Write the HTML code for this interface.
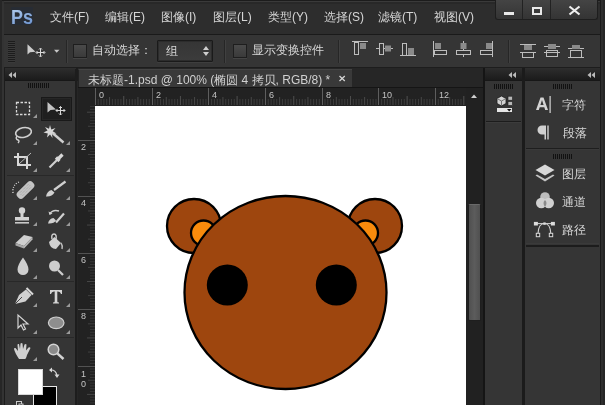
<!DOCTYPE html>
<html><head><meta charset="utf-8">
<style>
*{margin:0;padding:0;box-sizing:border-box}
html,body{width:605px;height:405px;overflow:hidden;background:#2a2a2a;font-family:"Liberation Sans",sans-serif;}
.a{position:absolute}
.t{position:absolute;color:#d6d6d6;font-size:12px;line-height:14px;white-space:nowrap;will-change:transform}
</style></head><body>
<!-- window frame -->
<div class="a" style="left:0;top:0;width:605px;height:405px;background:#2d2d2d"></div>
<div class="a" style="left:0;top:0;width:605px;height:1px;background:#1c1c1c"></div>
<div class="a" style="left:4px;top:1px;width:597px;height:1px;background:#3a3a3a"></div>
<div class="a" style="left:4px;top:2px;width:597px;height:2px;background:#282828"></div>
<div class="a" style="left:0;top:0;width:2px;height:2px;background:#cfcfcf;border-radius:0 0 2px 0"></div>
<div class="a" style="left:0;top:0;width:2px;height:405px;background:#262626"></div>
<div class="a" style="left:2px;top:1px;width:2px;height:404px;background:#333"></div>

<!-- menu bar -->
<svg class="a" style="left:10px;top:6px;will-change:transform" width="24" height="20"><defs><linearGradient id="pg" x1="0" y1="0" x2="0.4" y2="1"><stop offset="0" stop-color="#b8d2f0"/><stop offset="1" stop-color="#7096d0"/></linearGradient></defs>
<rect x="1" y="1" width="22" height="18" fill="#1c2a44" opacity="0.3"/>
<text x="1" y="18" font-family="Liberation Sans" font-weight="bold" font-size="20" fill="url(#pg)" textLength="22" lengthAdjust="spacingAndGlyphs">Ps</text></svg>
<div class="t" style="left:50px;top:10px">文件(F)</div>
<div class="t" style="left:105px;top:10px">编辑(E)</div>
<div class="t" style="left:161px;top:10px">图像(I)</div>
<div class="t" style="left:213px;top:10px">图层(L)</div>
<div class="t" style="left:268px;top:10px">类型(Y)</div>
<div class="t" style="left:324px;top:10px">选择(S)</div>
<div class="t" style="left:378px;top:10px">滤镜(T)</div>
<div class="t" style="left:434px;top:10px">视图(V)</div>

<!-- window buttons -->
<div class="a" style="left:495px;top:0;width:103px;height:20px;background:linear-gradient(#444,#343434);border:1px solid #1e1e1e;border-top:none;border-radius:0 0 3px 3px"></div>
<div class="a" style="left:522px;top:0;width:1px;height:19px;background:#222"></div>
<div class="a" style="left:550px;top:0;width:1px;height:19px;background:#222"></div>
<div class="a" style="left:504px;top:12px;width:10px;height:3px;background:#e8e8e8"></div>
<div class="a" style="left:532px;top:7px;width:10px;height:8px;border:2px solid #e8e8e8"></div>
<svg class="a" style="left:568px;top:5px" width="13" height="11"><path d="M1.5 1.5 L11.5 9.5 M11.5 1.5 L1.5 9.5" stroke="#eee" stroke-width="2.2"/></svg>

<!-- options bar -->
<div class="a" style="left:4px;top:34px;width:597px;height:1px;background:#1a1a1a"></div>
<div class="a" style="left:4px;top:35px;width:596px;height:33px;background:#353535"></div>
<div class="a" style="left:4px;top:67px;width:597px;height:1px;background:#1d1d1d"></div>

<!-- options bar content -->
<div class="a" style="left:8px;top:41px;width:7px;height:22px;background:repeating-linear-gradient(#1c1c1c 0 1px,#3a3a3a 1px 2px)"></div>
<svg class="a" style="left:25px;top:43px" width="36" height="16">
 <path d="M2.5 1.3 L2.5 11.5 L5 9.2 L10.5 8.8 Z" fill="#cdcdcd"/>
 <path d="M15.5 5.5 V13.5 M11.5 9.5 H19.5" stroke="#dadada" stroke-width="1"/>
 <path d="M14 6.5 L15.5 5 L17 6.5 M14 12.5 L15.5 14 L17 12.5 M12.5 8 L11 9.5 L12.5 11 M18.5 8 L20 9.5 L18.5 11" stroke="#dadada" stroke-width="1" fill="none"/>
 <path d="M29 6.8 L34.5 6.8 L31.7 9.8 Z" fill="#c8c8c8"/>
</svg>
<div class="a" style="left:66px;top:40px;width:1px;height:23px;background:#262626"></div>
<div class="a" style="left:67px;top:40px;width:1px;height:23px;background:#404040"></div>
<div class="a" style="left:73px;top:44px;width:14px;height:14px;background:linear-gradient(#4a4a4a,#3a3a3a);border:1px solid #1e1e1e;box-shadow:0 1px 0 #444"></div>
<div class="t" style="left:92px;top:43px">自动选择：</div>
<div class="a" style="left:157px;top:40px;width:56px;height:22px;background:linear-gradient(#353535,#3c3c3c);border:1px solid #1a1a1a;box-shadow:inset 0 0 0 1px #2c2c2c, 0 1px 0 #3e3e3e;border-radius:1px"></div>
<div class="t" style="left:166px;top:44px">组</div>
<svg class="a" style="left:202px;top:45px" width="8" height="12"><path d="M1 5 L4 1 L7 5 Z M1 7 L4 11 L7 7 Z" fill="#cfcfcf"/></svg>
<div class="a" style="left:224px;top:40px;width:1px;height:23px;background:#262626"></div>
<div class="a" style="left:225px;top:40px;width:1px;height:23px;background:#404040"></div>
<div class="a" style="left:233px;top:44px;width:14px;height:14px;background:linear-gradient(#4a4a4a,#3a3a3a);border:1px solid #1e1e1e;box-shadow:0 1px 0 #444"></div>
<div class="t" style="left:252px;top:43px">显示变换控件</div>
<div class="a" style="left:338px;top:40px;width:1px;height:23px;background:#262626"></div>
<div class="a" style="left:339px;top:40px;width:1px;height:23px;background:#404040"></div>
<div class="a" style="left:508px;top:40px;width:1px;height:23px;background:#262626"></div>
<div class="a" style="left:509px;top:40px;width:1px;height:23px;background:#404040"></div>
<svg class="a" style="left:350px;top:40px" width="240" height="20" fill="none" stroke="#bdbdbd" stroke-width="1">
 <!-- align top -->
 <path d="M2 1.5 H18"/><rect x="4.5" y="2.5" width="4" height="12"/><rect x="10" y="3" width="6" height="6" fill="#8a8a8a" stroke="none"/>
 <!-- align v center -->
 <path d="M26 8.5 H43"/><rect x="29.5" y="3.5" width="4" height="11" fill="#353535"/><rect x="35" y="5.5" width="6" height="6" fill="#8a8a8a" stroke="none"/>
 <!-- align bottom -->
 <path d="M50 15.5 H66"/><rect x="52.5" y="3.5" width="4" height="12"/><rect x="58" y="8" width="6" height="7" fill="#8a8a8a" stroke="none"/>
 <!-- align left -->
 <path d="M83.5 1 V17"/><rect x="84.5" y="10.5" width="12" height="4"/><rect x="85" y="3" width="6" height="6" fill="#8a8a8a" stroke="none"/>
 <!-- align h center -->
 <path d="M113.5 1 V17"/><rect x="106.5" y="10.5" width="14" height="4" fill="#353535"/><rect x="110.5" y="3" width="6" height="6" fill="#8a8a8a" stroke="none"/>
 <!-- align right -->
 <path d="M142.5 1 V17"/><rect x="130.5" y="10.5" width="12" height="4"/><rect x="136" y="3" width="6" height="6" fill="#8a8a8a" stroke="none"/>
 <!-- distribute -->
 <g transform="translate(0 2)">
 <path d="M170 2.5 H186 M170 10.5 H186"/><rect x="174" y="3" width="8" height="5" fill="#8a8a8a" stroke="none"/><rect x="172.5" y="10.5" width="11" height="5"/>
 <path d="M194 4.5 H210 M194 10.5 H210"/><rect x="198" y="2" width="8" height="5" fill="#8a8a8a" stroke="none"/><rect x="196.5" y="8.5" width="11" height="6"/>
 <path d="M218 6.5 H234 M218 15.5 H234"/><rect x="222" y="3" width="8" height="4" fill="#8a8a8a" stroke="none"/><rect x="220.5" y="8.5" width="11" height="7"/>
 </g>
</svg>

<!-- ===== left tools panel ===== -->
<div class="a" style="left:4px;top:68px;width:1px;height:337px;background:#1c1c1c"></div>
<div class="a" style="left:5px;top:69px;width:71px;height:12px;background:linear-gradient(#2c2c2c,#1b1b1b);border-bottom:1px solid #171717"></div>
<svg class="a" style="left:8px;top:71px" width="12" height="8"><path d="M4 1 L0.5 4 L4 7 Z M8 1 L4.5 4 L8 7 Z" fill="#bbb"/></svg>
<div class="a" style="left:5px;top:81px;width:71px;height:324px;background:#353535"></div>
<div class="a" style="left:76px;top:68px;width:2px;height:337px;background:#1d1d1d"></div>
<div class="a" style="left:77px;top:81px;width:1px;height:324px;background:#262626"></div>
<div class="a" style="left:75px;top:69px;width:1px;height:336px;background:#1d1d1d"></div>
<div class="a" style="left:28px;top:83px;width:21px;height:5px;background:repeating-linear-gradient(90deg,#111 0 1px,#353535 1px 2px)"></div>
<div class="a" style="left:41px;top:97px;width:31px;height:24px;background:#1f1f1f;border:1px solid #191919;box-shadow:inset 0 0 0 1px #262626"></div>

<!-- tool separators -->
<div class="a" style="left:7px;top:175px;width:67px;height:1px;background:#282828"></div>
<div class="a" style="left:7px;top:281px;width:67px;height:1px;background:#282828"></div>
<div class="a" style="left:7px;top:337px;width:67px;height:1px;background:#282828"></div>
<svg class="a" style="left:0;top:0" width="80" height="405">
 <g fill="#9a9a9a">
  <path d="M37 114 V118 H33Z"/>
  <path d="M37 141 V145 H33Z"/><path d="M70 141 V145 H66Z"/>
  <path d="M37 168 V172 H33Z"/><path d="M70 168 V172 H66Z"/>
  <path d="M37 196 V200 H33Z"/><path d="M70 196 V200 H66Z"/>
  <path d="M37 222 V226 H33Z"/><path d="M70 222 V226 H66Z"/>
  <path d="M37 248 V252 H33Z"/><path d="M70 248 V252 H66Z"/>
  <path d="M37 275 V279 H33Z"/><path d="M70 275 V279 H66Z"/>
  <path d="M37 303 V307 H33Z"/><path d="M70 303 V307 H66Z"/>
  <path d="M37 330 V334 H33Z"/><path d="M70 330 V334 H66Z"/>
  <path d="M37 357 V361 H33Z"/>
 </g>
 <!-- marquee -->
 <rect x="16.5" y="102.5" width="13" height="12" fill="none" stroke="#d8d8d8" stroke-width="1.3" stroke-dasharray="2.5 1.5"/>
 <!-- move -->
 <path d="M47.5 102 L47.5 112.5 L50.5 110 L56 109.5 Z" fill="#c4c4c4"/>
 <g stroke="#d8d8d8" stroke-width="1" fill="none"><path d="M60.5 106.5 V115 M56 110.5 H65"/><path d="M59 108 L60.5 106.5 L62 108 M59 113.5 L60.5 115 L62 113.5 M57.5 109 L56 110.5 L57.5 112 M63.5 109 L65 110.5 L63.5 112"/></g>
 <!-- lasso -->
 <ellipse cx="23.5" cy="132.5" rx="8" ry="4.8" transform="rotate(-12 23.5 132.5)" fill="none" stroke="#d0d0d0" stroke-width="1.6"/>
 <path d="M17 136 Q15 139 18 140 Q20 141 18 143" fill="none" stroke="#d0d0d0" stroke-width="1.4"/>
 <!-- magic wand -->
 <path d="M50 125 L51.3 129.5 L55.5 128 L52.7 131.3 L56.5 133.5 L52 133.8 L52.5 138 L50 134.5 L47 137.5 L47.8 133.5 L43.5 132.5 L47.5 130.5 L45 127 L49 128.8Z" fill="#d8d8d8"/>
 <path d="M52.5 133 L63.5 142.5" stroke="#cfcfcf" stroke-width="2.4"/>
 <!-- crop -->
 <g stroke="#d8d8d8" stroke-width="2" fill="none"><path d="M18 153 V165 H31"/><path d="M14 157 H27 V169"/></g>
 <path d="M19 164 L31 153" stroke="#bbb" stroke-width="1"/>
 <!-- eyedropper -->
 <path d="M49.5 167.5 L58 159" stroke="#d0d0d0" stroke-width="2.2"/>
 <path d="M56 157.5 L59.5 161 M58 159 L62.5 154.5" stroke="#d8d8d8" stroke-width="3.2"/>
 <!-- healing -->
 <g transform="rotate(-45 25.5 190)"><rect x="15" y="186" width="21" height="8" rx="3.5" fill="#c4c4c4"/><path d="M19 188 h13 M19 190 h13 M19 192 h13" stroke="#8a8a8a" stroke-width="0.6" stroke-dasharray="1 1"/></g>
 <path d="M13 193 Q12 185 19 182" fill="none" stroke="#ddd" stroke-width="1.3" stroke-dasharray="1 1.5"/>
 <!-- brush -->
 <path d="M54 190 L65.5 181.5" stroke="#d0d0d0" stroke-width="2.2"/>
 <path d="M46 196.5 Q47 191 51.5 190 L54.5 192.5 Q52 197 46 196.5Z" fill="#d0d0d0"/>
 <!-- stamp -->
 <circle cx="22" cy="210.5" r="3.2" fill="#d4d4d4"/>
 <rect x="20.5" y="212" width="3" height="5" fill="#d4d4d4"/>
 <path d="M15 217 H29 V220.5 H15Z" fill="#d4d4d4"/>
 <rect x="15" y="222" width="14" height="1.6" fill="#c8c8c8"/>
 <!-- history brush -->
 <path d="M56 222.5 L64 213.5" stroke="#d0d0d0" stroke-width="2.2"/>
 <path d="M48 223.5 Q49 218.5 53.5 218 L56 220.5 Q54 224 48 223.5Z" fill="#d0d0d0"/>
 <path d="M49.5 214 Q53 209 59 211" fill="none" stroke="#cfcfcf" stroke-width="1.4"/>
 <path d="M48.5 211.5 L49.5 215 L52.5 213.5Z" fill="#cfcfcf"/>
 <!-- eraser -->
 <path d="M15.5 243 L24 235 L32.5 237 L24 246 Z" fill="#d0d0d0"/>
 <path d="M15.5 243 L24 246 L24 248.5 L15.5 245.5Z" fill="#a8a8a8"/>
 <path d="M24 246 L32.5 237 L32.5 239.5 L24 248.5Z" fill="#b8b8b8"/>
 <!-- bucket -->
 <path d="M49 242 L54.5 237 L61 243 L56 249 Q50 249 49 242Z" fill="#d0d0d0"/>
 <path d="M52 239 Q51 234 54 234 Q57 234 56 240" fill="none" stroke="#d0d0d0" stroke-width="1.4"/>
 <path d="M61 243 Q63 246 62 249" stroke="#bbb" stroke-width="1.5" fill="none"/>
 <!-- blur drop -->
 <path d="M23 257.5 Q28.5 265 28.5 269.5 A5.5 5.5 0 0 1 17.5 269.5 Q17.5 265 23 257.5Z" fill="#cfcfcf"/>
 <!-- dodge -->
 <circle cx="54.5" cy="266" r="5.5" fill="#cdcdcd"/>
 <path d="M58 270 L63 275" stroke="#cdcdcd" stroke-width="2.3"/>
 <!-- pen -->
 <path d="M15 304 L19 295 L26 289.5 L31.5 295 L25.5 301.5 Z" fill="#d0d0d0"/>
 <path d="M15 304 L22 297" stroke="#444" stroke-width="1"/>
 <path d="M26.5 288 L33 294.5" stroke="#d8d8d8" stroke-width="2"/>
 <!-- T -->
 <path d="M50 290 H62 V294 H61 Q60.5 291.5 58 291.5 H57.3 V301.5 Q57.3 302.6 59 302.6 V303.5 H53 V302.6 Q54.7 302.6 54.7 301.5 V291.5 H54 Q51.5 291.5 51 294 H50Z" fill="#d4d4d4"/>
 <!-- path select -->
 <path d="M18 315 L18 328 L21 325 L23.5 330 L25.5 329 L23 324 L28 324 Z" fill="#303030" stroke="#d4d4d4" stroke-width="1.2"/>
 <!-- ellipse -->
 <ellipse cx="56.2" cy="322.8" rx="7.8" ry="5.8" fill="#8e8e8e" stroke="#d0d0d0" stroke-width="1.2"/>
 <!-- hand -->
 <path d="M19 359 Q15 353 14 349 Q14 347.5 15.5 348 L18 351 L17.5 345 Q17.5 343.5 19 344 L20 349 L20.5 343.5 Q21.5 342.5 22.5 343.5 L23 349 L24.5 344.5 Q25.5 343.5 26.5 344.5 L26 350.5 L28.5 347.5 Q30 347 30.5 348 L27 355 Q26 359 25 359Z" fill="#d0d0d0"/>
 <!-- zoom -->
 <circle cx="53.5" cy="349.5" r="5.3" fill="#8a8a8a" stroke="#d4d4d4" stroke-width="1.5"/>
 <path d="M57.3 353.3 L63.5 359" stroke="#d4d4d4" stroke-width="2.5"/>
 <!-- swap / default -->
 <path d="M50 370 Q56 369.5 57 376" fill="none" stroke="#cfcfcf" stroke-width="1.3"/><path d="M52 367.5 L49 370 L52 372.5Z M54.5 374.5 L57 378 L59.5 374.5Z" fill="#d8d8d8"/>
 <rect x="16.5" y="401.5" width="5" height="5" fill="none" stroke="#ccc" stroke-width="1"/><rect x="19" y="404" width="4" height="4" fill="#222" stroke="#ccc" stroke-width="1"/>
</svg>
<div class="a" style="left:33px;top:386px;width:24px;height:24px;background:#000;border:1px solid #e6e6e6"></div>
<div class="a" style="left:18px;top:369px;width:25px;height:26px;background:#fff;border:1px solid #d8d8d8"></div>

<!-- ===== document area ===== -->
<div class="a" style="left:78px;top:68px;width:405px;height:20px;background:#262626"></div>
<div class="a" style="left:78px;top:69px;width:274px;height:19px;background:#393939;border-left:1px solid #222;border-top:1px solid #444"></div>
<div class="t" style="left:88px;top:73px;color:#d0d0d0">未标题-1.psd @ 100% (椭圆 4 拷贝, RGB/8) *</div>
<svg class="a" style="left:338px;top:74px" width="9" height="9"><path d="M1.5 2 L6.8 7 M6.8 2 L1.5 7" stroke="#d4d4d4" stroke-width="1.3"/></svg>
<div class="a" style="left:78px;top:88px;width:388px;height:18px;background:#222"></div>
<div class="a" style="left:78px;top:87px;width:405px;height:1px;background:#151515"></div>
<div class="a" style="left:78px;top:88px;width:17px;height:317px;background:#222"></div>
<div class="a" style="left:95px;top:106px;width:371px;height:299px;background:#fff"></div>
<div class="a" style="left:466px;top:88px;width:17px;height:317px;background:#212121"></div>
<div class="a" style="left:483px;top:68px;width:2px;height:337px;background:#151515"></div>

<!-- ===== right panels ===== -->
<div class="a" style="left:485px;top:69px;width:37px;height:12px;background:linear-gradient(#2c2c2c,#1b1b1b);border-bottom:1px solid #171717"></div>
<div class="a" style="left:485px;top:81px;width:37px;height:324px;background:#353535"></div>
<div class="a" style="left:522px;top:68px;width:3px;height:337px;background:#1b1b1b"></div>
<div class="a" style="left:525px;top:69px;width:75px;height:12px;background:linear-gradient(#2c2c2c,#1b1b1b);border-bottom:1px solid #171717"></div>
<div class="a" style="left:525px;top:81px;width:75px;height:324px;background:#353535"></div>
<div class="a" style="left:600px;top:0;width:1px;height:405px;background:#1a1a1a"></div>
<div class="a" style="left:601px;top:0;width:4px;height:405px;background:#2e2e2e"></div>
<div class="a" style="left:603px;top:0;width:2px;height:405px;background:#262626"></div>

<svg class="a" style="left:0;top:0" width="605" height="405"><g stroke-width="1"><path d="M95.5 88 V105" stroke="#5e5e5e"/><path d="M98.23 99 V105" stroke="#3e3e3e"/><path d="M101.07 99 V105" stroke="#3e3e3e"/><path d="M103.90 99 V105" stroke="#3e3e3e"/><path d="M106.74 99 V105" stroke="#3e3e3e"/><path d="M109.57 97 V105" stroke="#484848"/><path d="M112.40 99 V105" stroke="#3e3e3e"/><path d="M115.24 99 V105" stroke="#3e3e3e"/><path d="M118.07 99 V105" stroke="#3e3e3e"/><path d="M120.91 99 V105" stroke="#3e3e3e"/><path d="M123.74 96 V105" stroke="#505050"/><path d="M126.57 99 V105" stroke="#3e3e3e"/><path d="M129.41 99 V105" stroke="#3e3e3e"/><path d="M132.24 99 V105" stroke="#3e3e3e"/><path d="M135.08 99 V105" stroke="#3e3e3e"/><path d="M137.91 97 V105" stroke="#484848"/><path d="M140.74 99 V105" stroke="#3e3e3e"/><path d="M143.58 99 V105" stroke="#3e3e3e"/><path d="M146.41 99 V105" stroke="#3e3e3e"/><path d="M149.25 99 V105" stroke="#3e3e3e"/><path d="M152.5 88 V105" stroke="#5e5e5e"/><path d="M154.91 99 V105" stroke="#3e3e3e"/><path d="M157.75 99 V105" stroke="#3e3e3e"/><path d="M160.58 99 V105" stroke="#3e3e3e"/><path d="M163.42 99 V105" stroke="#3e3e3e"/><path d="M166.25 97 V105" stroke="#484848"/><path d="M169.08 99 V105" stroke="#3e3e3e"/><path d="M171.92 99 V105" stroke="#3e3e3e"/><path d="M174.75 99 V105" stroke="#3e3e3e"/><path d="M177.59 99 V105" stroke="#3e3e3e"/><path d="M180.42 96 V105" stroke="#505050"/><path d="M183.25 99 V105" stroke="#3e3e3e"/><path d="M186.09 99 V105" stroke="#3e3e3e"/><path d="M188.92 99 V105" stroke="#3e3e3e"/><path d="M191.76 99 V105" stroke="#3e3e3e"/><path d="M194.59 97 V105" stroke="#484848"/><path d="M197.42 99 V105" stroke="#3e3e3e"/><path d="M200.26 99 V105" stroke="#3e3e3e"/><path d="M203.09 99 V105" stroke="#3e3e3e"/><path d="M205.93 99 V105" stroke="#3e3e3e"/><path d="M208.5 88 V105" stroke="#5e5e5e"/><path d="M211.59 99 V105" stroke="#3e3e3e"/><path d="M214.43 99 V105" stroke="#3e3e3e"/><path d="M217.26 99 V105" stroke="#3e3e3e"/><path d="M220.10 99 V105" stroke="#3e3e3e"/><path d="M222.93 97 V105" stroke="#484848"/><path d="M225.76 99 V105" stroke="#3e3e3e"/><path d="M228.60 99 V105" stroke="#3e3e3e"/><path d="M231.43 99 V105" stroke="#3e3e3e"/><path d="M234.27 99 V105" stroke="#3e3e3e"/><path d="M237.10 96 V105" stroke="#505050"/><path d="M239.93 99 V105" stroke="#3e3e3e"/><path d="M242.77 99 V105" stroke="#3e3e3e"/><path d="M245.60 99 V105" stroke="#3e3e3e"/><path d="M248.44 99 V105" stroke="#3e3e3e"/><path d="M251.27 97 V105" stroke="#484848"/><path d="M254.10 99 V105" stroke="#3e3e3e"/><path d="M256.94 99 V105" stroke="#3e3e3e"/><path d="M259.77 99 V105" stroke="#3e3e3e"/><path d="M262.61 99 V105" stroke="#3e3e3e"/><path d="M265.5 88 V105" stroke="#5e5e5e"/><path d="M268.27 99 V105" stroke="#3e3e3e"/><path d="M271.11 99 V105" stroke="#3e3e3e"/><path d="M273.94 99 V105" stroke="#3e3e3e"/><path d="M276.78 99 V105" stroke="#3e3e3e"/><path d="M279.61 97 V105" stroke="#484848"/><path d="M282.44 99 V105" stroke="#3e3e3e"/><path d="M285.28 99 V105" stroke="#3e3e3e"/><path d="M288.11 99 V105" stroke="#3e3e3e"/><path d="M290.95 99 V105" stroke="#3e3e3e"/><path d="M293.78 96 V105" stroke="#505050"/><path d="M296.61 99 V105" stroke="#3e3e3e"/><path d="M299.45 99 V105" stroke="#3e3e3e"/><path d="M302.28 99 V105" stroke="#3e3e3e"/><path d="M305.12 99 V105" stroke="#3e3e3e"/><path d="M307.95 97 V105" stroke="#484848"/><path d="M310.78 99 V105" stroke="#3e3e3e"/><path d="M313.62 99 V105" stroke="#3e3e3e"/><path d="M316.45 99 V105" stroke="#3e3e3e"/><path d="M319.29 99 V105" stroke="#3e3e3e"/><path d="M322.5 88 V105" stroke="#5e5e5e"/><path d="M324.95 99 V105" stroke="#3e3e3e"/><path d="M327.79 99 V105" stroke="#3e3e3e"/><path d="M330.62 99 V105" stroke="#3e3e3e"/><path d="M333.46 99 V105" stroke="#3e3e3e"/><path d="M336.29 97 V105" stroke="#484848"/><path d="M339.12 99 V105" stroke="#3e3e3e"/><path d="M341.96 99 V105" stroke="#3e3e3e"/><path d="M344.79 99 V105" stroke="#3e3e3e"/><path d="M347.63 99 V105" stroke="#3e3e3e"/><path d="M350.46 96 V105" stroke="#505050"/><path d="M353.29 99 V105" stroke="#3e3e3e"/><path d="M356.13 99 V105" stroke="#3e3e3e"/><path d="M358.96 99 V105" stroke="#3e3e3e"/><path d="M361.80 99 V105" stroke="#3e3e3e"/><path d="M364.63 97 V105" stroke="#484848"/><path d="M367.46 99 V105" stroke="#3e3e3e"/><path d="M370.30 99 V105" stroke="#3e3e3e"/><path d="M373.13 99 V105" stroke="#3e3e3e"/><path d="M375.97 99 V105" stroke="#3e3e3e"/><path d="M378.5 88 V105" stroke="#5e5e5e"/><path d="M381.63 99 V105" stroke="#3e3e3e"/><path d="M384.47 99 V105" stroke="#3e3e3e"/><path d="M387.30 99 V105" stroke="#3e3e3e"/><path d="M390.14 99 V105" stroke="#3e3e3e"/><path d="M392.97 97 V105" stroke="#484848"/><path d="M395.80 99 V105" stroke="#3e3e3e"/><path d="M398.64 99 V105" stroke="#3e3e3e"/><path d="M401.47 99 V105" stroke="#3e3e3e"/><path d="M404.31 99 V105" stroke="#3e3e3e"/><path d="M407.14 96 V105" stroke="#505050"/><path d="M409.97 99 V105" stroke="#3e3e3e"/><path d="M412.81 99 V105" stroke="#3e3e3e"/><path d="M415.64 99 V105" stroke="#3e3e3e"/><path d="M418.48 99 V105" stroke="#3e3e3e"/><path d="M421.31 97 V105" stroke="#484848"/><path d="M424.14 99 V105" stroke="#3e3e3e"/><path d="M426.98 99 V105" stroke="#3e3e3e"/><path d="M429.81 99 V105" stroke="#3e3e3e"/><path d="M432.65 99 V105" stroke="#3e3e3e"/><path d="M435.5 88 V105" stroke="#5e5e5e"/><path d="M438.31 99 V105" stroke="#3e3e3e"/><path d="M441.15 99 V105" stroke="#3e3e3e"/><path d="M443.98 99 V105" stroke="#3e3e3e"/><path d="M446.82 99 V105" stroke="#3e3e3e"/><path d="M449.65 97 V105" stroke="#484848"/><path d="M452.48 99 V105" stroke="#3e3e3e"/><path d="M455.32 99 V105" stroke="#3e3e3e"/><path d="M458.15 99 V105" stroke="#3e3e3e"/><path d="M460.99 99 V105" stroke="#3e3e3e"/><path d="M463.82 96 V105" stroke="#505050"/><path d="M90 106.54 H95" stroke="#383838"/><path d="M90 109.36 H95" stroke="#383838"/><path d="M87 112.18 H95" stroke="#464646"/><path d="M90 115.00 H95" stroke="#383838"/><path d="M90 117.82 H95" stroke="#383838"/><path d="M90 120.65 H95" stroke="#383838"/><path d="M90 123.47 H95" stroke="#383838"/><path d="M88 126.29 H95" stroke="#404040"/><path d="M90 129.11 H95" stroke="#383838"/><path d="M90 131.93 H95" stroke="#383838"/><path d="M90 134.76 H95" stroke="#383838"/><path d="M90 137.58 H95" stroke="#383838"/><path d="M78 140.5 H95" stroke="#525252"/><path d="M90 143.22 H95" stroke="#383838"/><path d="M90 146.04 H95" stroke="#383838"/><path d="M90 148.87 H95" stroke="#383838"/><path d="M90 151.69 H95" stroke="#383838"/><path d="M88 154.51 H95" stroke="#404040"/><path d="M90 157.33 H95" stroke="#383838"/><path d="M90 160.15 H95" stroke="#383838"/><path d="M90 162.98 H95" stroke="#383838"/><path d="M90 165.80 H95" stroke="#383838"/><path d="M87 168.62 H95" stroke="#464646"/><path d="M90 171.44 H95" stroke="#383838"/><path d="M90 174.26 H95" stroke="#383838"/><path d="M90 177.09 H95" stroke="#383838"/><path d="M90 179.91 H95" stroke="#383838"/><path d="M88 182.73 H95" stroke="#404040"/><path d="M90 185.55 H95" stroke="#383838"/><path d="M90 188.37 H95" stroke="#383838"/><path d="M90 191.20 H95" stroke="#383838"/><path d="M90 194.02 H95" stroke="#383838"/><path d="M78 196.5 H95" stroke="#525252"/><path d="M90 199.66 H95" stroke="#383838"/><path d="M90 202.48 H95" stroke="#383838"/><path d="M90 205.31 H95" stroke="#383838"/><path d="M90 208.13 H95" stroke="#383838"/><path d="M88 210.95 H95" stroke="#404040"/><path d="M90 213.77 H95" stroke="#383838"/><path d="M90 216.59 H95" stroke="#383838"/><path d="M90 219.42 H95" stroke="#383838"/><path d="M90 222.24 H95" stroke="#383838"/><path d="M87 225.06 H95" stroke="#464646"/><path d="M90 227.88 H95" stroke="#383838"/><path d="M90 230.70 H95" stroke="#383838"/><path d="M90 233.53 H95" stroke="#383838"/><path d="M90 236.35 H95" stroke="#383838"/><path d="M88 239.17 H95" stroke="#404040"/><path d="M90 241.99 H95" stroke="#383838"/><path d="M90 244.81 H95" stroke="#383838"/><path d="M90 247.64 H95" stroke="#383838"/><path d="M90 250.46 H95" stroke="#383838"/><path d="M78 253.5 H95" stroke="#525252"/><path d="M90 256.10 H95" stroke="#383838"/><path d="M90 258.92 H95" stroke="#383838"/><path d="M90 261.75 H95" stroke="#383838"/><path d="M90 264.57 H95" stroke="#383838"/><path d="M88 267.39 H95" stroke="#404040"/><path d="M90 270.21 H95" stroke="#383838"/><path d="M90 273.03 H95" stroke="#383838"/><path d="M90 275.86 H95" stroke="#383838"/><path d="M90 278.68 H95" stroke="#383838"/><path d="M87 281.50 H95" stroke="#464646"/><path d="M90 284.32 H95" stroke="#383838"/><path d="M90 287.14 H95" stroke="#383838"/><path d="M90 289.97 H95" stroke="#383838"/><path d="M90 292.79 H95" stroke="#383838"/><path d="M88 295.61 H95" stroke="#404040"/><path d="M90 298.43 H95" stroke="#383838"/><path d="M90 301.25 H95" stroke="#383838"/><path d="M90 304.08 H95" stroke="#383838"/><path d="M90 306.90 H95" stroke="#383838"/><path d="M78 309.5 H95" stroke="#525252"/><path d="M90 312.54 H95" stroke="#383838"/><path d="M90 315.36 H95" stroke="#383838"/><path d="M90 318.19 H95" stroke="#383838"/><path d="M90 321.01 H95" stroke="#383838"/><path d="M88 323.83 H95" stroke="#404040"/><path d="M90 326.65 H95" stroke="#383838"/><path d="M90 329.47 H95" stroke="#383838"/><path d="M90 332.30 H95" stroke="#383838"/><path d="M90 335.12 H95" stroke="#383838"/><path d="M87 337.94 H95" stroke="#464646"/><path d="M90 340.76 H95" stroke="#383838"/><path d="M90 343.58 H95" stroke="#383838"/><path d="M90 346.41 H95" stroke="#383838"/><path d="M90 349.23 H95" stroke="#383838"/><path d="M88 352.05 H95" stroke="#404040"/><path d="M90 354.87 H95" stroke="#383838"/><path d="M90 357.69 H95" stroke="#383838"/><path d="M90 360.52 H95" stroke="#383838"/><path d="M90 363.34 H95" stroke="#383838"/><path d="M78 366.5 H95" stroke="#525252"/><path d="M90 368.98 H95" stroke="#383838"/><path d="M90 371.80 H95" stroke="#383838"/><path d="M90 374.63 H95" stroke="#383838"/><path d="M90 377.45 H95" stroke="#383838"/><path d="M88 380.27 H95" stroke="#404040"/><path d="M90 383.09 H95" stroke="#383838"/><path d="M90 385.91 H95" stroke="#383838"/><path d="M90 388.74 H95" stroke="#383838"/><path d="M90 391.56 H95" stroke="#383838"/><path d="M87 394.38 H95" stroke="#464646"/><path d="M90 397.20 H95" stroke="#383838"/><path d="M90 400.02 H95" stroke="#383838"/><path d="M90 402.85 H95" stroke="#383838"/></g></svg>
<div class="a" style="left:99px;top:91px;font-size:9px;line-height:9px;color:#c4c4c4;will-change:transform">0</div>
<div class="a" style="left:156px;top:91px;font-size:9px;line-height:9px;color:#c4c4c4;will-change:transform">2</div>
<div class="a" style="left:212px;top:91px;font-size:9px;line-height:9px;color:#c4c4c4;will-change:transform">4</div>
<div class="a" style="left:269px;top:91px;font-size:9px;line-height:9px;color:#c4c4c4;will-change:transform">6</div>
<div class="a" style="left:326px;top:91px;font-size:9px;line-height:9px;color:#c4c4c4;will-change:transform">8</div>
<div class="a" style="left:382px;top:91px;font-size:9px;line-height:9px;color:#c4c4c4;will-change:transform">10</div>
<div class="a" style="left:439px;top:91px;font-size:9px;line-height:9px;color:#c4c4c4;will-change:transform">12</div>
<div class="a" style="left:81px;top:143px;font-size:9px;line-height:9px;color:#c4c4c4;will-change:transform">2</div>
<div class="a" style="left:81px;top:199px;font-size:9px;line-height:9px;color:#c4c4c4;will-change:transform">4</div>
<div class="a" style="left:81px;top:256px;font-size:9px;line-height:9px;color:#c4c4c4;will-change:transform">6</div>
<div class="a" style="left:81px;top:312px;font-size:9px;line-height:9px;color:#c4c4c4;will-change:transform">8</div>
<div class="a" style="left:81px;top:369px;font-size:9px;line-height:10px;color:#c4c4c4;will-change:transform;width:6px;word-break:break-all;white-space:normal">1 0</div>

<!-- scrollbar -->
<svg class="a" style="left:469px;top:93px" width="10" height="6"><path d="M2 5 L5 1.5 L8 5Z" fill="#cfcfcf"/></svg>
<div class="a" style="left:468px;top:204px;width:13px;height:117px;background:linear-gradient(90deg,#505050,#5c5c5c 50%,#505050);border:1px solid #1e1e1e;border-radius:2px;border-top-color:#6a6a6a"></div>

<!-- bear -->
<svg class="a" style="left:0;top:0" width="605" height="405">
 <g stroke="#000" stroke-width="2.3">
  <circle cx="194" cy="226" r="27" fill="#9e460e"/>
  <circle cx="375" cy="226" r="27" fill="#9e460e"/>
  <circle cx="203.5" cy="233" r="12.5" fill="#f98b0c"/>
  <circle cx="365.5" cy="233" r="12.5" fill="#f98b0c"/>
  <ellipse cx="285.5" cy="292.5" rx="101" ry="96.5" fill="#9e460e"/>
 </g>
 <circle cx="227.3" cy="285" r="20.5" fill="#000"/>
 <circle cx="336.3" cy="285" r="20.5" fill="#000"/>
</svg>

<!-- right narrow panel content -->
<svg class="a" style="left:508px;top:71px" width="12" height="8"><path d="M4 1 L0.5 4 L4 7 Z M8 1 L4.5 4 L8 7 Z" fill="#bbb"/></svg>
<svg class="a" style="left:587px;top:71px" width="12" height="8"><path d="M4 1 L0.5 4 L4 7 Z M8 1 L4.5 4 L8 7 Z" fill="#bbb"/></svg>
<div class="a" style="left:494px;top:84px;width:19px;height:5px;background:repeating-linear-gradient(90deg,#111 0 1px,#353535 1px 2px)"></div>
<div class="a" style="left:553px;top:84px;width:19px;height:5px;background:repeating-linear-gradient(90deg,#111 0 1px,#353535 1px 2px)"></div>
<div class="a" style="left:553px;top:154px;width:19px;height:5px;background:repeating-linear-gradient(90deg,#111 0 1px,#353535 1px 2px)"></div>
<svg class="a" style="left:485px;top:90px" width="37" height="25">
 <path d="M12 8.5 L16.5 6 L21 8.5 L21 13.5 L16.5 16 L12 13.5Z" fill="#d4d4d4" stroke="#1c1c1c" stroke-width="0.8"/>
 <path d="M12 8.5 L16.5 11 L21 8.5 M16.5 11 V16" stroke="#6a6a6a" stroke-width="0.9" fill="none"/>
 <rect x="23" y="6.2" width="4.5" height="4" fill="#b8b8b8" stroke="#1c1c1c" stroke-width="0.6"/>
 <rect x="23" y="11.5" width="4.5" height="4" fill="#b8b8b8" stroke="#1c1c1c" stroke-width="0.6"/>
 <rect x="12" y="18" width="15" height="4" fill="#e6e6e6"/>
 <path d="M22 19 L26.5 19 L24.2 21.5Z" fill="#111"/>
</svg>
<div class="a" style="left:486px;top:121px;width:35px;height:1px;background:#1c1c1c"></div>
<div class="a" style="left:486px;top:122px;width:35px;height:1px;background:#3c3c3c"></div>
<div class="a" style="left:526px;top:148px;width:73px;height:1px;background:#1e1e1e"></div>
<div class="a" style="left:526px;top:149px;width:73px;height:1px;background:#3a3a3a"></div>
<div class="a" style="left:526px;top:243px;width:73px;height:1px;background:#3a3a3a"></div>
<div class="a" style="left:526px;top:245px;width:73px;height:2px;background:#1c1c1c"></div>

<!-- wide panel items -->
<svg class="a" style="left:530px;top:90px" width="30" height="160">
 <!-- A| -->
 <path d="M6 20 L10.5 7.5 L13.5 7.5 L18 20 L15.2 20 L14.3 17.2 L9.7 17.2 L8.8 20Z M10.4 15 L13.6 15 L12 10Z" fill="#d4d4d4"/>
 <rect x="19.5" y="6" width="1.2" height="17" fill="#d8d8d8"/>
 <!-- pilcrow -->
 <path d="M12 35.5 A4.5 4.5 0 0 0 12 44.5 L14.5 44.5 L14.5 49.5 L16 49.5 L16 35.5Z" fill="#d0d0d0"/>
 <rect x="17.3" y="35.5" width="1.4" height="14" fill="#d0d0d0"/>
 <!-- layers -->
 <path d="M5.5 80 L15 74.5 L24.5 80 L15 85.5Z" fill="#d8d8d8"/>
 <path d="M7 84.5 L5.5 85.5 L15 91.5 L24.5 85.5 L23 84.5 L15 89Z" fill="#c4c4c4"/>
 <!-- channels -->
 <circle cx="15" cy="107" r="4.8" fill="#bdbdbd"/>
 <circle cx="11.3" cy="113" r="5.3" fill="#d0d0d0"/>
 <circle cx="18.7" cy="113" r="5.3" fill="#d0d0d0"/>
 <path d="M15 110 Q18 113 15 117 Q12 113 15 110Z" fill="#8a8a8a"/>
 <!-- paths -->
 <path d="M8 143.5 Q8.5 133.5 14.4 133.5 Q20.3 133.5 20.8 143.5" fill="none" stroke="#d4d4d4" stroke-width="1.1"/>
 <path d="M7.5 133.6 H21.5" stroke="#d4d4d4" stroke-width="1"/>
 <rect x="3.9" y="131.9" width="4" height="3.6" fill="#dcdcdc"/>
 <rect x="20.9" y="131.9" width="4" height="3.6" fill="#dcdcdc"/>
 <rect x="13.3" y="132.4" width="2.4" height="2.4" fill="#dcdcdc"/>
 <rect x="6.3" y="143.3" width="3.4" height="3.4" fill="#2a2a2a" stroke="#d8d8d8" stroke-width="1"/>
 <rect x="19.3" y="143.3" width="3.4" height="3.4" fill="#2a2a2a" stroke="#d8d8d8" stroke-width="1"/>
</svg>
<div class="t" style="left:562px;top:98px">字符</div>
<div class="t" style="left:563px;top:126px">段落</div>
<div class="t" style="left:562px;top:167px">图层</div>
<div class="t" style="left:562px;top:195px">通道</div>
<div class="t" style="left:562px;top:223px">路径</div>
</body></html>
